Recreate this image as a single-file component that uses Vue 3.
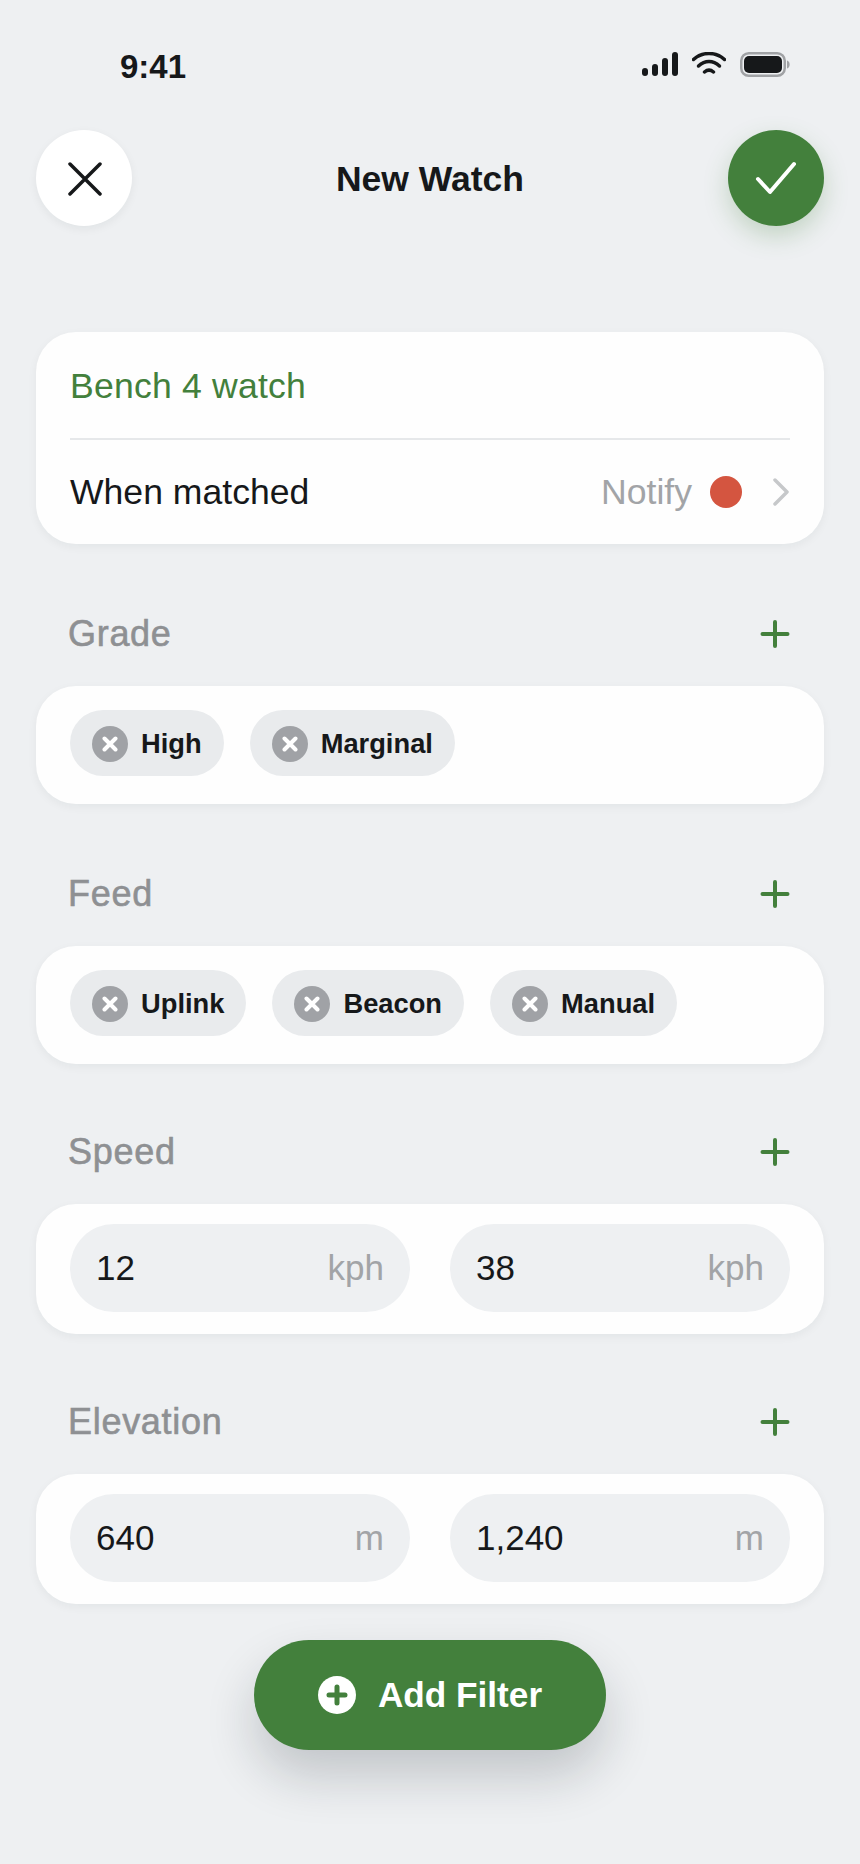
<template>
  <div class="screen">
    <div class="status">
      <span class="time">9:41</span>
      <div class="status-icons">
        <svg width="36" height="24" viewBox="0 0 36 24">
          <rect x="0" y="16" width="6" height="8" rx="3" />
          <rect x="10" y="12" width="6" height="12" rx="3" />
          <rect x="20" y="6" width="6" height="18" rx="3" />
          <rect x="30" y="0" width="6" height="24" rx="3" />
        </svg>
        <svg width="34" height="22" viewBox="0 0 34 22" class="wifi">
          <path d="M1.500 7.500C10 -0.500 24 -0.500 32.500 7.500" />
          <path d="M6.500 14C13 8 21 8 27.500 14" />
          <path d="M12.500 20C15.500 17.500 18.500 17.500 21.500 20" />
        </svg>
        <svg width="51" height="25" viewBox="0 0 51 25">
          <rect x="1.250" y="1.250" width="43.500" height="22.500" rx="7.500" fill="none" stroke="#a0a2a5" stroke-width="2.500" />
          <rect x="4" y="4" width="38" height="17" rx="5" />
          <path d="M47 8.500c3.500 .5 3.500 7.500 0 8z" fill="#a0a2a5" />
        </svg>
      </div>
    </div>

    <div class="topbar">
      <button class="round close">
        <svg width="36" height="36" viewBox="0 0 36 36">
          <path d="M4 4L34 34M34 4L4 34" />
        </svg>
      </button>
      <h1>New Watch</h1>
      <button class="round confirm">
        <svg width="42" height="34" viewBox="0 0 42 34">
          <path d="M3 18L15 31L39 3" />
        </svg>
      </button>
    </div>

    <div class="card name-card">
      <div class="name-row">Bench 4 watch</div>
      <div class="match-row">
        <span>When matched</span>
        <div class="match-value">
          <span class="notify">Notify</span>
          <i class="dot"></i>
          <svg width="18" height="28" viewBox="0 0 18 28">
            <path d="M3 2L15 14L3 26" />
          </svg>
        </div>
      </div>
    </div>

    <section v-for="group in groups" :key="group.label" class="group" :class="group.cls">
      <div class="group-head">
        <span>{{ group.label }}</span>
        <svg width="30" height="30" viewBox="0 0 30 30">
          <path d="M15 3V27M2.500 15H27.500" />
        </svg>
      </div>
      <div v-if="group.chips" class="card chips">
        <div v-for="chip in group.chips" :key="chip" class="chip">
          <i class="chip-x">
            <svg width="16" height="16" viewBox="0 0 16 16">
              <path d="M2.500 2.500L13.500 13.500M13.500 2.500L2.500 13.500" />
            </svg>
          </i>
          <span>{{ chip }}</span>
        </div>
      </div>
      <div v-else class="card range">
        <div v-for="v in group.values" :key="v" class="field">
          <span>{{ v }}</span>
          <span class="unit">{{ group.unit }}</span>
        </div>
      </div>
    </section>

    <button class="add">
      <svg width="38" height="38" viewBox="0 0 38 38">
        <circle cx="19" cy="19" r="19" fill="#fff" />
        <path d="M19 11V27M11 19H27" />
      </svg>
      <span>Add Filter</span>
    </button>
  </div>
</template>

<script setup>
const groups = [
  { label: 'Grade', cls: 'g-grade', chips: ['High', 'Marginal'] },
  { label: 'Feed', cls: 'g-feed', chips: ['Uplink', 'Beacon', 'Manual'] },
  { label: 'Speed', cls: 'g-speed', values: ['12', '38'], unit: 'kph' },
  { label: 'Elevation', cls: 'g-elev', values: ['640', '1,240'], unit: 'm' }
]
</script>

<style>
html,
body {
  margin: 0;
  background: #eef0f2;
}
</style>

<style scoped>
.screen {
  width: 860px;
  height: 1864px;
  box-sizing: border-box;
  padding: 0 36px;
  background: #eef0f2;
  color: #16181a;
  font-family: "Liberation Sans", Arial, sans-serif;
  overflow: hidden;
  display: flex;
  flex-direction: column;
}

.status {
  height: 130px;
  box-sizing: border-box;
  padding: 47px 33px 0 84px;
  display: flex;
  justify-content: space-between;
  align-items: flex-start;
}
.time {
  font-size: 33px;
  line-height: 40px;
  font-weight: 700;
}
.status-icons {
  display: flex;
  align-items: flex-start;
  gap: 14px;
  padding-top: 5px;
}
.status-icons svg {
  fill: #16181a;
  display: block;
}
.status-icons .wifi {
  fill: none;
  stroke: #16181a;
  stroke-width: 3.500;
  stroke-linecap: round;
}

.topbar {
  height: 96px;
  display: flex;
  align-items: center;
  justify-content: space-between;
}
.topbar h1 {
  margin: 2px 0 0;
  font-size: 35.500px;
  font-weight: 700;
  line-height: 40px;
}
.round {
  width: 96px;
  height: 96px;
  border: 0;
  padding: 0;
  border-radius: 50%;
  display: flex;
  align-items: center;
  justify-content: center;
}
.round path {
  fill: none;
  stroke-linecap: round;
  stroke-linejoin: round;
}
.close {
  background: #fff;
  box-shadow: 0 3px 10px rgba(20, 30, 40, 0.06);
}
.close path {
  stroke: #16181a;
  stroke-width: 3.500;
}
.confirm {
  background: #43803c;
  box-shadow: 0 10px 24px rgba(67, 128, 60, 0.25);
}
.confirm path {
  stroke: #fff;
  stroke-width: 4;
}

.card {
  background: #fefefe;
  border-radius: 40px;
  box-shadow: 0 3px 10px rgba(20, 30, 40, 0.05);
}
.name-card {
  margin-top: 106px;
  padding: 0 34px;
  font-size: 35.600px;
}
.name-row {
  height: 106px;
  line-height: 108px;
  color: #43803c;
  letter-spacing: 0.2px;
  border-bottom: 2px solid #e6e8ea;
  box-sizing: content-box;
}
.match-row {
  height: 104px;
  display: flex;
  align-items: center;
  justify-content: space-between;
}
.match-value {
  display: flex;
  align-items: center;
}
.notify {
  color: #a2a4a7;
}
.dot {
  width: 32px;
  height: 32px;
  margin: 0 30px 0 18px;
  border-radius: 50%;
  background: #d45540;
}
.match-value svg {
  display: block;
}
.match-value path {
  fill: none;
  stroke: #c6c8ca;
  stroke-width: 3.500;
  stroke-linecap: round;
  stroke-linejoin: round;
}

.group-head {
  height: 60px;
  padding: 0 34px 0 32px;
  display: flex;
  align-items: center;
  justify-content: space-between;
  font-size: 36px;
  letter-spacing: 0.7px;
  -webkit-text-stroke: 0.6px #8e9093;
  color: #8e9093;
  margin-bottom: 22px;
}
.group-head svg {
  display: block;
}
.group-head path {
  fill: none;
  stroke: #43803c;
  stroke-width: 4;
  stroke-linecap: round;
}
.g-grade {
  margin-top: 60px;
}
.g-feed {
  margin-top: 60px;
}
.g-speed {
  margin-top: 58px;
}
.g-elev {
  margin-top: 58px;
}

.chips {
  height: 118px;
  box-sizing: border-box;
  padding: 0 34px 4px;
  display: flex;
  align-items: center;
  gap: 26px;
}
.chip {
  height: 66px;
  box-sizing: border-box;
  padding: 2px 22px 0;
  border-radius: 33px;
  background: #e9ebed;
  display: flex;
  align-items: center;
  gap: 13px;
  font-size: 27.300px;
  font-weight: 700;
}
.chip-x {
  width: 36px;
  height: 36px;
  border-radius: 50%;
  background: #a0a2a6;
  display: flex;
  align-items: center;
  justify-content: center;
}
.chip-x path {
  fill: none;
  stroke: #fff;
  stroke-width: 4;
  stroke-linecap: round;
}

.range {
  height: 130px;
  box-sizing: border-box;
  padding: 0 34px 2px;
  display: grid;
  grid-template-columns: 1fr 1fr;
  gap: 40px;
  align-items: center;
}
.field {
  height: 88px;
  border-radius: 44px;
  background: #eef0f2;
  padding: 0 26px;
  display: flex;
  align-items: center;
  justify-content: space-between;
  font-size: 35px;
}
.unit {
  color: #a2a4a7;
}

.add {
  margin: 36px auto 0;
  width: 352px;
  height: 110px;
  flex: none;
  border: 0;
  border-radius: 55px;
  background: #43803c;
  color: #fff;
  font-family: inherit;
  font-size: 35.200px;
  font-weight: 700;
  display: flex;
  align-items: center;
  justify-content: center;
  gap: 22px;
  box-shadow: 0 26px 50px rgba(20, 30, 40, 0.2);
}
.add path {
  fill: none;
  stroke: #43803c;
  stroke-width: 5;
  stroke-linecap: round;
}
</style>
